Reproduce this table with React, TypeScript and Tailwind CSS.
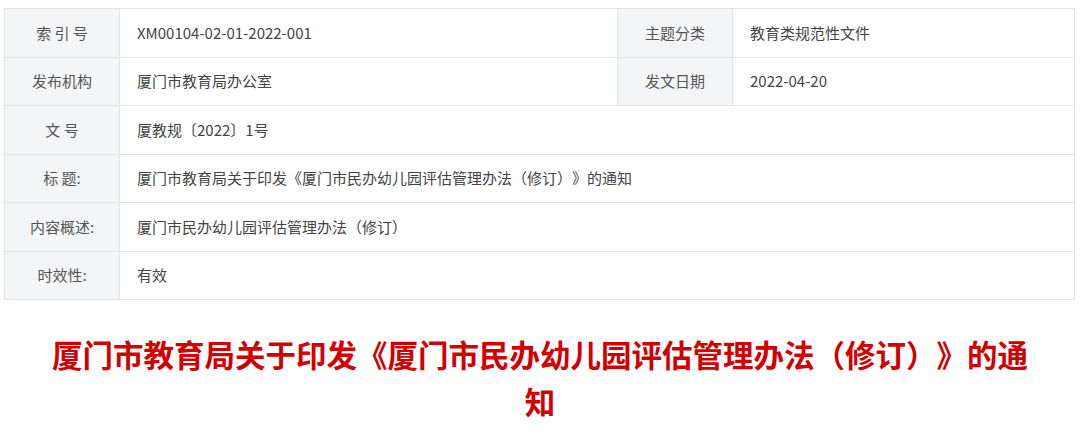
import React from 'react';

const font = { fontFamily: '"Noto Sans CJK SC", "Noto Sans", sans-serif' };

const Label: React.FC<{ children: React.ReactNode }> = ({ children }) => (
  <td className="w-[115px] h-[48.5px] border border-[#e3e4e6] bg-[#f4f5f7] text-center text-[15px] text-[#555]">
    {children}
  </td>
);

const Value: React.FC<{ children: React.ReactNode; span?: number }> = ({ children, span }) => (
  <td colSpan={span} className="h-[48.5px] border border-[#e3e4e6] bg-white pl-[17px] text-[15px] text-[#444]">
    {children}
  </td>
);

export default function App() {
  return (
    <div className="w-[1080px] h-[432px] bg-white overflow-hidden [text-spacing-trim:space-all]" style={font}>
      <div className="pt-[8px] px-[4px]">
        <table className="w-[1071px] border-collapse table-fixed">
          <colgroup>
            <col className="w-[115px]" />
            <col className="w-[498px]" />
            <col className="w-[115px]" />
            <col />
          </colgroup>
          <tbody>
            <tr>
              <Label>索 引 号</Label>
              <Value>XM00104-02-01-2022-001</Value>
              <Label>主题分类</Label>
              <Value>教育类规范性文件</Value>
            </tr>
            <tr>
              <Label>发布机构</Label>
              <Value>厦门市教育局办公室</Value>
              <Label>发文日期</Label>
              <Value>2022-04-20</Value>
            </tr>
            <tr>
              <Label>文 号</Label>
              <Value span={3}>厦教规〔2022〕1号</Value>
            </tr>
            <tr>
              <Label>标 题:</Label>
              <Value span={3}>厦门市教育局关于印发《厦门市民办幼儿园评估管理办法（修订）》的通知</Value>
            </tr>
            <tr>
              <Label>内容概述:</Label>
              <Value span={3}>厦门市民办幼儿园评估管理办法（修订）</Value>
            </tr>
            <tr>
              <Label>时效性:</Label>
              <Value span={3}>有效</Value>
            </tr>
          </tbody>
        </table>
      </div>
      <div className="mt-[31px] mx-auto w-[990px] text-center text-[30.5px] leading-[47px] font-bold text-[#d20000]">
        厦门市教育局关于印发《厦门市民办幼儿园评估管理办法（修订）》的通知
      </div>
    </div>
  );
}
